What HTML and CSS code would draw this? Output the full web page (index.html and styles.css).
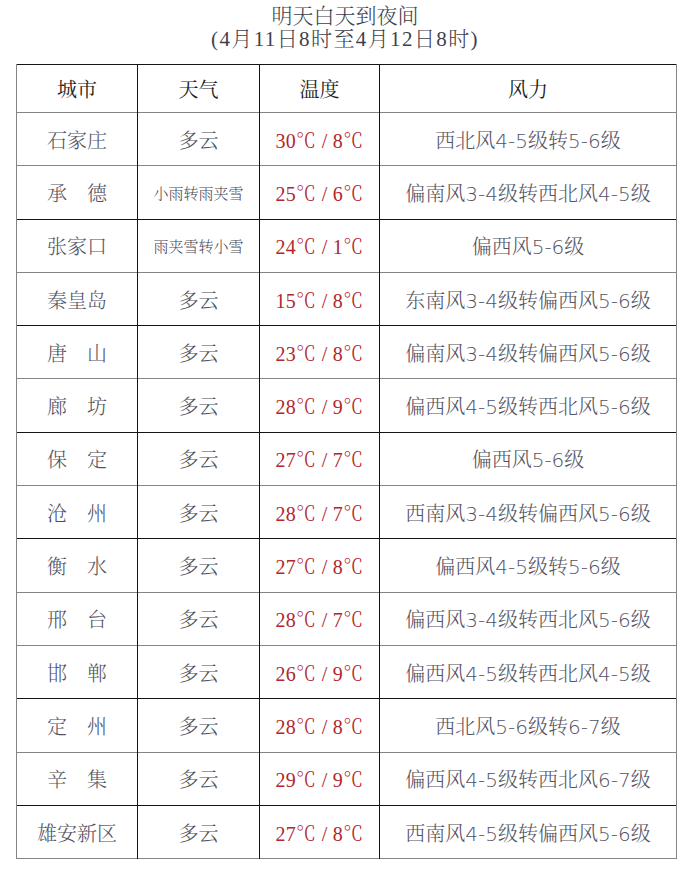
FILE: index.html
```html
<!DOCTYPE html>
<html lang="zh-CN">
<head>
<meta charset="utf-8">
<title>明天白天到夜间</title>
<link rel="stylesheet" href="styles.css">
</head>
<body>
<div class="page">
  <header class="title">
    <div class="title-line">明天白天到夜间</div>
    <div class="title-line sub">(4月11日8时至4月12日8时)</div>
  </header>
  <table class="forecast">
    <colgroup>
      <col class="c-city"><col class="c-weather"><col class="c-temp"><col class="c-wind">
    </colgroup>
    <thead>
      <tr class="head"><th>城市</th><th>天气</th><th>温度</th><th>风力</th></tr>
    </thead>
    <tbody>
      <tr><td class="city">石家庄</td><td class="wx">多云</td><td class="temp">30℃ / 8℃</td><td class="wind">西北风4-5级转5-6级</td></tr>
      <tr class="k"><td class="city">承　德</td><td class="wx small">小雨转雨夹雪</td><td class="temp">25℃ / 6℃</td><td class="wind">偏南风3-4级转西北风4-5级</td></tr>
      <tr><td class="city">张家口</td><td class="wx small">雨夹雪转小雪</td><td class="temp">24℃ / 1℃</td><td class="wind">偏西风5-6级</td></tr>
      <tr class="k"><td class="city">秦皇岛</td><td class="wx">多云</td><td class="temp">15℃ / 8℃</td><td class="wind">东南风3-4级转偏西风5-6级</td></tr>
      <tr><td class="city">唐　山</td><td class="wx">多云</td><td class="temp">23℃ / 8℃</td><td class="wind">偏南风3-4级转偏西风5-6级</td></tr>
      <tr class="k"><td class="city">廊　坊</td><td class="wx">多云</td><td class="temp">28℃ / 9℃</td><td class="wind">偏西风4-5级转西北风5-6级</td></tr>
      <tr><td class="city">保　定</td><td class="wx">多云</td><td class="temp">27℃ / 7℃</td><td class="wind">偏西风5-6级</td></tr>
      <tr class="k"><td class="city">沧　州</td><td class="wx">多云</td><td class="temp">28℃ / 7℃</td><td class="wind">西南风3-4级转偏西风5-6级</td></tr>
      <tr><td class="city">衡　水</td><td class="wx">多云</td><td class="temp">27℃ / 8℃</td><td class="wind">偏西风4-5级转5-6级</td></tr>
      <tr><td class="city">邢　台</td><td class="wx">多云</td><td class="temp">28℃ / 7℃</td><td class="wind">偏西风3-4级转西北风5-6级</td></tr>
      <tr class="k"><td class="city">邯　郸</td><td class="wx">多云</td><td class="temp">26℃ / 9℃</td><td class="wind">偏西风4-5级转西北风4-5级</td></tr>
      <tr><td class="city">定　州</td><td class="wx">多云</td><td class="temp">28℃ / 8℃</td><td class="wind">西北风5-6级转6-7级</td></tr>
      <tr class="k"><td class="city">辛　集</td><td class="wx">多云</td><td class="temp">29℃ / 9℃</td><td class="wind">偏西风4-5级转西北风6-7级</td></tr>
      <tr><td class="city">雄安新区</td><td class="wx">多云</td><td class="temp">27℃ / 8℃</td><td class="wind">西南风4-5级转偏西风5-6级</td></tr>
    </tbody>
  </table>
</div>
</body>
</html>
```

FILE: styles.css
```css
html, body {
  margin: 0;
  padding: 0;
  background: #ffffff;
}

.page {
  width: 690px;
  font-family: "Liberation Serif", "Noto Serif CJK SC", "Noto Sans CJK SC", serif;
  color: #53535f;
}

.title {
  box-sizing: border-box;
  height: 64px;
  padding-top: 5px;
  text-align: center;
  font-size: 21px;
  line-height: 23px;
  color: #3f3f4c;
  font-weight: 300;
}

.title-line.sub {
  letter-spacing: 1.4px;
}

.forecast {
  margin-left: 16px;
  width: 660px;
  border-collapse: collapse;
  table-layout: fixed;
}

.c-city { width: 121px; }
.c-weather { width: 122px; }
.c-temp { width: 120px; }
.c-wind { width: 297px; }

.forecast tr {
  border-bottom: 1px solid #858585;
}

.forecast tr.k {
  border-bottom: 1px solid #141414;
}

.forecast tr.head {
  border-top: 1px solid #141414;
  height: 48px;
}

.forecast tbody tr {
  height: 53.3px;
}

.forecast th,
.forecast td {
  padding: 0;
  text-align: center;
  vertical-align: middle;
  border-left: 1px solid #141414;
  border-right: 1px solid #141414;
  font-size: 20px;
  font-weight: 300;
  white-space: nowrap;
}

.forecast th:first-child,
.forecast td:first-child {
  border-left: 1px solid #858585;
}

.forecast th:last-child,
.forecast td:last-child {
  border-right: 1px solid #858585;
}

.forecast th {
  color: #1c1c1c;
  font-weight: 400;
}

.city {
  color: #53535f;
}

.wx {
  color: #4c4c57;
}

.wx.small {
  font-size: 15px;
}

.temp {
  color: #b3262c;
  letter-spacing: 0.3px;
}

.wind {
  font-family: "DejaVu Sans", "Noto Serif CJK SC", "Noto Sans CJK SC", sans-serif;
  color: #53535f;
}
```
